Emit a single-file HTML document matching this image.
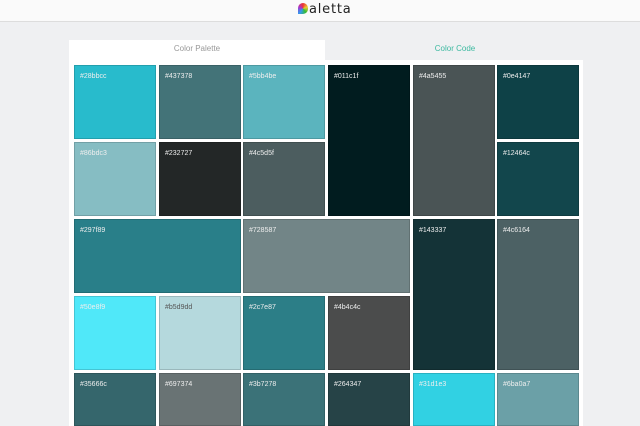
<!DOCTYPE html><html style="overflow:hidden;height:426px"><head><style>
body{margin:0;width:640px;height:426px;overflow:hidden;background:#eff0f2;font-family:"Liberation Sans",sans-serif;position:relative}
.hd{position:absolute;left:0;top:0;width:640px;height:21px;background:#fafafa;border-bottom:1px solid #ddd}
.logo{position:absolute;left:298px;top:3px;font-size:13px;line-height:14px;letter-spacing:0.8px;color:#222;font-family:"DejaVu Sans",sans-serif}
.tab{position:absolute;top:40px;height:20px;width:256px;text-align:center;font-size:8px;line-height:18px}
.panel{position:absolute;left:69px;top:60px;width:514px;height:366px;background:#fff}
.t{position:absolute;border:1px solid rgba(0,0,0,.15);font-size:7px;color:#eee;box-sizing:border-box;padding:7px 5px;overflow:hidden}
</style></head><body>
<div class="hd"><div class="logo"><span style="display:inline-block;width:10px;height:11px;border-radius:5px 5px 5px 0;background:conic-gradient(#e33,#ec3,#3b3,#39e,#a3c,#e33);vertical-align:-1px;margin-right:1px"></span>aletta</div></div>
<div class="tab" style="left:69px;background:#fff;color:#999">Color Palette</div>
<div class="tab" style="left:327px;color:#3cb9a0">Color Code</div>
<div class="panel"></div>
<div id="g"></div>
<script>
var X=[74,159,243,328,413,497],Y=[65,142,219,296,373];
var d=[[0,0,1,1,'28bbcc'],[1,0,1,1,'437378'],[2,0,1,1,'5bb4be'],[3,0,1,2,'011c1f'],[4,0,1,2,'4a5455'],[5,0,1,1,'0e4147'],
[0,1,1,1,'86bdc3'],[1,1,1,1,'232727'],[2,1,1,1,'4c5d5f'],[5,1,1,1,'12464c'],
[0,2,2,1,'297f89'],[2,2,2,1,'728587'],[4,2,1,2,'143337'],[5,2,1,2,'4c6164'],
[0,3,1,1,'50e8f9'],[1,3,1,1,'b5d9dd'],[2,3,1,1,'2c7e87'],[3,3,1,1,'4b4c4c'],
[0,4,1,1,'35666c'],[1,4,1,1,'697374'],[2,4,1,1,'3b7278'],[3,4,1,1,'264347'],[4,4,1,1,'31d1e3'],[5,4,1,1,'6ba0a7']];
var h='';d.forEach(function(a){var w=82+(a[2]-1)*84.6,ht=74+(a[3]-1)*77;if(a[1]==4)ht=53;
h+='<div class="t" style="left:'+X[a[0]]+'px;top:'+Y[a[1]]+'px;width:'+w+'px;height:'+ht+'px;background:#'+a[4]+(a[4]=='b5d9dd'?';color:#555':'')+'">#'+a[4]+'</div>';});
document.getElementById('g').innerHTML=h;
</script></body></html>
